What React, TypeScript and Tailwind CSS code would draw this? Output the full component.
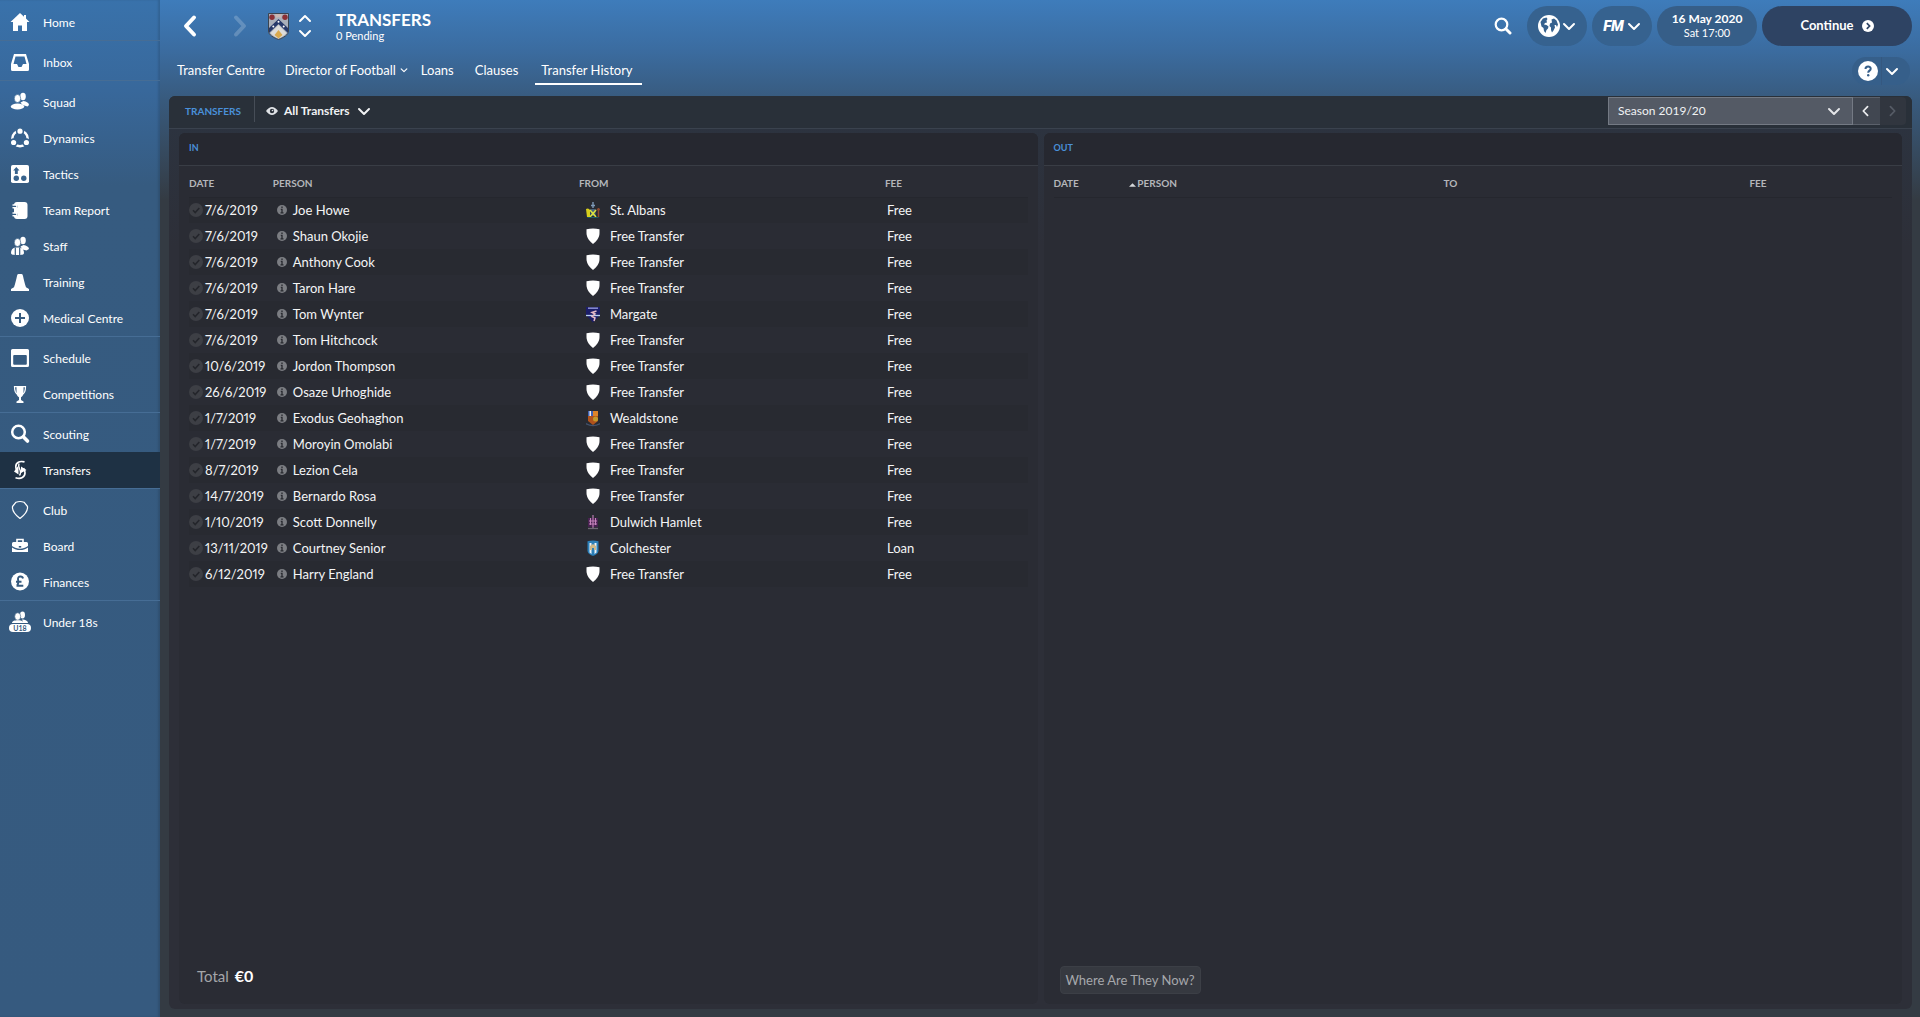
import React from "react";

type IconName =
  | "home"
  | "inbox"
  | "squad"
  | "dynamics"
  | "tactics"
  | "report"
  | "staff"
  | "training"
  | "medical"
  | "schedule"
  | "competitions"
  | "scouting"
  | "transfers"
  | "club"
  | "board"
  | "finances"
  | "under18";

interface NavItem {
  label: string;
  icon: IconName;
  active?: boolean;
}

const navGroups: NavItem[][] = [
  [{ label: "Home", icon: "home" }],
  [{ label: "Inbox", icon: "inbox" }],
  [
    { label: "Squad", icon: "squad" },
    { label: "Dynamics", icon: "dynamics" },
    { label: "Tactics", icon: "tactics" },
    { label: "Team Report", icon: "report" },
    { label: "Staff", icon: "staff" },
    { label: "Training", icon: "training" },
    { label: "Medical Centre", icon: "medical" },
  ],
  [
    { label: "Schedule", icon: "schedule" },
    { label: "Competitions", icon: "competitions" },
  ],
  [
    { label: "Scouting", icon: "scouting" },
    { label: "Transfers", icon: "transfers", active: true },
  ],
  [
    { label: "Club", icon: "club" },
    { label: "Board", icon: "board" },
    { label: "Finances", icon: "finances" },
  ],
  [{ label: "Under 18s", icon: "under18" }],
];

interface Transfer {
  date: string;
  person: string;
  from: string;
  fee: string;
}

const transfersIn: Transfer[] = [
  { date: "7/6/2019", person: "Joe Howe", from: "St. Albans", fee: "Free" },
  { date: "7/6/2019", person: "Shaun Okojie", from: "Free Transfer", fee: "Free" },
  { date: "7/6/2019", person: "Anthony Cook", from: "Free Transfer", fee: "Free" },
  { date: "7/6/2019", person: "Taron Hare", from: "Free Transfer", fee: "Free" },
  { date: "7/6/2019", person: "Tom Wynter", from: "Margate", fee: "Free" },
  { date: "7/6/2019", person: "Tom Hitchcock", from: "Free Transfer", fee: "Free" },
  { date: "10/6/2019", person: "Jordon Thompson", from: "Free Transfer", fee: "Free" },
  { date: "26/6/2019", person: "Osaze Urhoghide", from: "Free Transfer", fee: "Free" },
  { date: "1/7/2019", person: "Exodus Geohaghon", from: "Wealdstone", fee: "Free" },
  { date: "1/7/2019", person: "Moroyin Omolabi", from: "Free Transfer", fee: "Free" },
  { date: "8/7/2019", person: "Lezion Cela", from: "Free Transfer", fee: "Free" },
  { date: "14/7/2019", person: "Bernardo Rosa", from: "Free Transfer", fee: "Free" },
  { date: "1/10/2019", person: "Scott Donnelly", from: "Dulwich Hamlet", fee: "Free" },
  { date: "13/11/2019", person: "Courtney Senior", from: "Colchester", fee: "Loan" },
  { date: "6/12/2019", person: "Harry England", from: "Free Transfer", fee: "Free" },
];

const navIcons: Record<IconName, React.ReactNode> = {
  home: (
    <path d="M11 2 1.500 11H4v9h5v-5.500h4V20h5v-9h2.500L17 7.600V4h-2v1.700z" />
  ),
  inbox: (
    <path
      fillRule="evenodd"
      d="M5 3h12l3 10v5.500a1.500 1.500 0 0 1-1.500 1.500h-15A1.500 1.500 0 0 1 2 18.500V13zM6.500 5.500 4.500 13H8l1.500 3h3l1.500-3h3.500l-2-7.500z"
    />
  ),
  squad: (
    <>
      <ellipse cx="14" cy="5.500" rx="2.800" ry="3.700" />
      <path d="M14.500 10c3 .5 5.500 2 5.500 4l-1.500 1.500-5-1.500-2-2.500z" />
      <ellipse cx="8.500" cy="7.500" rx="3.200" ry="4" stroke="#386692" strokeWidth=".6" />
      <ellipse cx="8.500" cy="15.500" rx="6.700" ry="3" />
    </>
  ),
  dynamics: (
    <>
      <circle cx="11" cy="11.500" r="7.700" fill="none" stroke="currentColor" strokeWidth="2.400" />
      <g stroke="#37638e" strokeWidth="1.600">
        <circle cx="11" cy="4.200" r="3.400" />
        <circle cx="4.600" cy="15.500" r="3.400" />
        <circle cx="17.400" cy="15.500" r="3.400" />
      </g>
    </>
  ),
  tactics: (
    <>
      <rect x="2" y="2" width="18" height="18" rx="1.800" />
      <path d="m7.300 4 3.200 3.500H8.800V11H5.900V7.500H4.200z" fill="#37628c" />
      <circle cx="7.300" cy="15.300" r="2.700" fill="#37628c" />
      <circle cx="14.800" cy="15.300" r="2.700" fill="#37628c" />
    </>
  ),
  report: (
    <>
      <rect x="5" y="3" width="13.500" height="17" rx="3" />
      <g fill="none" stroke="#365d84" strokeWidth="3.200" strokeLinecap="round">
        <path d="M3 7.500h4M3 15.500h4" />
      </g>
      <g fill="none" stroke="currentColor" strokeWidth="1.400" strokeLinecap="round">
        <path d="M4 6h2.500a1.400 1.400 0 0 1 0 2.800H4M4 14h2.500a1.400 1.400 0 0 1 0 2.800H4" />
      </g>
    </>
  ),
  staff: (
    <>
      <ellipse cx="14" cy="5.500" rx="2.800" ry="3.700" />
      <path d="M14.500 10c3 .5 5.500 2 5.500 4l-2.500 1.500-4-1-2-3z" />
      <ellipse cx="8.500" cy="7.500" rx="3.200" ry="4" stroke="#365c82" strokeWidth=".6" />
      <path d="M2 18c0-3 1.500-5 4-5.500h5c2.500.5 4 2.500 4 5.500 0 1.700-2.500 2-6.500 2S2 19.700 2 18z" />
      <path d="M6.300 12.500v7.500M10.700 12.500v7.500" stroke="#365b7f" strokeWidth="1.200" />
    </>
  ),
  training: (
    <path d="M9.500 3h3c1 0 1.200.8 1.500 2 .8 3.500 1.700 7.500 3 11.300L20 18v2H2v-2l3-1.700C6.300 12.500 7.200 8.500 8 5c.3-1.200.5-2 1.500-2z" />
  ),
  medical: (
    <>
      <circle cx="11" cy="11" r="9" />
      <path d="M11 6v10M6 11h10" stroke="#365b7f" strokeWidth="2" />
    </>
  ),
  schedule: (
    <path
      fillRule="evenodd"
      d="M3.500 2h15A1.500 1.500 0 0 1 20 3.500v15a1.500 1.500 0 0 1-1.500 1.500h-15A1.500 1.500 0 0 1 2 18.500v-15A1.500 1.500 0 0 1 3.500 2zm1.700 6a1 1 0 0 0-1 1v7.700a1 1 0 0 0 1 1h11.600a1 1 0 0 0 1-1V9a1 1 0 0 0-1-1z"
    />
  ),
  competitions: (
    <>
      <path d="M7.500 3h7v6c0 3-1 4.500-2.500 5.300V17l2.500 1.500V20h-7v-1.500L10 17v-2.700C8.500 13.500 7.500 12 7.500 9z" />
      <path d="M8 3.700H5.500C5.500 8 6.200 10.500 9 11.500M14 3.700h2.500c0 4.300-.7 6.800-3.500 7.800" fill="none" stroke="currentColor" strokeWidth="1.200" />
    </>
  ),
  scouting: (
    <>
      <circle cx="9.500" cy="9" r="6.300" fill="none" stroke="currentColor" strokeWidth="2.500" />
      <path d="m14.500 14 4 4" stroke="currentColor" strokeWidth="3.600" strokeLinecap="round" />
    </>
  ),
  transfers: (
    <>
      <path d="M15.500 2.900C10.500 1.700 6.800 3.500 6.800 7.500c0 1 .2 2 .7 3M6.500 18.700c5.500 1.800 9.500-.5 9.500-5 0-1.700-.5-3-1.500-4.500" fill="none" stroke="currentColor" strokeWidth="1.700" />
      <path d="M9.500 6.500v9L5 12.500zM12 6v9M12 7.500l5.500 3.500-5.500 3z" />
      <path d="M10 4.500c-1.500 4 1.500 5 1.500 9 0 1-.3 2-1 3" fill="none" stroke="currentColor" strokeWidth="1.400" />
    </>
  ),
  club: (
    <path d="M7 3.200Q11 1.800 15 3.200l3.500 4.300c.5 4.500-3.500 9-7.500 12-4-3-8-7.500-7.500-12z" fill="none" stroke="currentColor" strokeWidth="1.200" strokeLinejoin="round" />
  ),
  board: (
    <>
      <path d="M8 7.500v-3h6v3" fill="none" stroke="currentColor" strokeWidth="1.600" />
      <path d="M4.500 7h13A1.500 1.500 0 0 1 19 8.500V11c-3 2-5 2.700-8 2.700S6 13 3 11V8.500A1.500 1.500 0 0 1 4.500 7z" />
      <path d="M3 12.500c3 2 5 2.500 8 2.500s5-.5 8-2.500V17H3z" />
      <path d="M9.800 11h2.400v1.600H9.800z" fill="#365a7e" />
    </>
  ),
  finances: (
    <>
      <circle cx="11" cy="10.500" r="9" />
      <path d="M14 7.500C13.500 4.700 8.800 4.800 9 8c.1 2 1.200 4-.9 6.500M7 10.700h5.500M7.500 14.700h6.800" fill="none" stroke="#365a7e" strokeWidth="1.900" />
    </>
  ),
  under18: (
    <>
      <ellipse cx="13.500" cy="4" rx="2.500" ry="3.400" />
      <ellipse cx="8.700" cy="5.500" rx="3" ry="3.700" stroke="#365a7e" strokeWidth=".6" />
      <path d="M3 12c0-2 3-2.700 5.500-2.700S13 9.500 14 11l-1-2.500c3 0 6 1.500 6 3.500z" />
      <rect x="0" y="13" width="22" height="8" rx="4" />
      <text x="11" y="19.500" textAnchor="middle" fontSize="7" fontFamily="Lato, sans-serif" fontWeight="700" fill="#365a7e">
        U18
      </text>
    </>
  ),
};

function Chevron({ dir, className }: { dir: "up" | "down" | "left" | "right"; className: string }) {
  const paths = {
    up: "M2 9 7 4l5 5",
    down: "M2 5l5 5 5-5",
    left: "M10 2 5 7l5 5",
    right: "M4 2l5 5-5 5",
  };
  return (
    <svg viewBox="0 0 14 14" fill="none" stroke="currentColor" strokeWidth="2" className={className} aria-hidden="true">
      <path d={paths[dir]} strokeLinecap="round" strokeLinejoin="round" />
    </svg>
  );
}

function ClubCrest() {
  return (
    <svg viewBox="0 0 21 27" className="w-[21px] h-[27px]" aria-hidden="true">
      <path d="M.5.5h20V18c0 4-5 6.500-10 8.500C5.500 24.500.5 22 .5 18z" fill="#a9afba" stroke="#3a4450" />
      <circle cx="4" cy="4.200" r="2.700" fill="#8a2f35" />
      <circle cx="17" cy="4.200" r="2.700" fill="#8a2f35" />
      <path d="M7 1h7l-1 4-2.500-1L8 5z" fill="#c9b6b3" />
      <path d="m10.500 6 9.500 9v5L10.500 11 1 20v-5z" fill="#26386a" />
      <circle cx="10.500" cy="8.700" r="1" fill="#fff" />
      <circle cx="5.300" cy="13.500" r="1" fill="#fff" />
      <circle cx="15.700" cy="13.500" r="1" fill="#fff" />
      <path d="m10.500 12 8 8c-2 2.800-5 4.200-8 5.500-3-1.300-6-2.700-8-5.500z" fill="#dddcda" />
      <path d="m10.500 17 4 5-4 3.500-4-3.500z" fill="#d9a94e" />
    </svg>
  );
}

function Badge({ club }: { club: string }) {
  let art: React.ReactNode = (
    <path d="M.5 1.200Q7-.2 13.500 1.200V5c0 5-3.500 8.500-6.500 11C4 13.500.5 10 .5 5z" fill="#fff" />
  );
  if (club === "St. Albans") {
    art = (
      <>
        <path d="M0 7q2.500-1.500 4 1v7H1z" fill="#d8cf1c" />
        <path d="M4.500 7h5v7h-5z" fill="#48617f" />
        <path d="m4 15 6-7M10 15 4 8" stroke="#dfe43a" strokeWidth="1.500" />
        <path d="M7 0v6M5 3.500h4" stroke="#7e9ab8" strokeWidth="1.400" />
        <path d="M12.500 6v9M10.800 7.500H14" stroke="#8d4a30" strokeWidth="1.500" />
        <path d="M1.500 15.500h11" stroke="#1c5a66" />
      </>
    );
  } else if (club === "Margate") {
    art = (
      <>
        <path d="M0 1h14v8l-7 7.500L0 9z" fill="#1b1d68" />
        <path d="M2 2.200h10" stroke="#8a8ed0" strokeWidth="1.500" />
        <path d="M0 9.500h14" stroke="#b9d0ee" strokeWidth="1.300" />
        <path d="M10.500 5 6 6.500 9 8 6 10.500l3 1.500-1 3" fill="none" stroke="#e3b9c6" strokeWidth="1.500" />
      </>
    );
  } else if (club === "Wealdstone") {
    art = (
      <>
        <path d="M2 1h10v10l-5 4-5-4z" fill="#b0521c" />
        <path d="M2 1h5v5H2z" fill="#3f62b5" />
        <path d="M3.500 1h1.500v5H3.500z" fill="#f0f0f0" />
        <path d="M7 1h5v5H7z" fill="#dc842a" />
        <circle cx="9.500" cy="9" r="2.500" fill="#c29a2c" />
        <path d="M0 13q7 4 14 0v1.500q-7 3.500-14 0z" fill="#43526b" />
      </>
    );
  } else if (club === "Dulwich Hamlet") {
    art = (
      <>
        <path d="M2 4h10v9H2z" fill="#46214f" />
        <path d="M7 1v13M3 7h8M3 10h8M4.500 4v7M9.500 4v7" stroke="#c582bb" strokeWidth="1.100" />
        <path d="M2 14.500h10" stroke="#6f6675" strokeWidth="1.300" />
      </>
    );
  } else if (club === "Colchester") {
    art = (
      <>
        <path d="M1.500 1.200Q7 0 12.500 1.200v9.300c0 3-3 4.500-5.500 5.500-2.500-1-5.500-2.500-5.500-5.500z" fill="#2b7fb8" />
        <path d="M3.500 3h2v11l-2-1.500zM8.500 3h2v9.500l-2 1.500z" fill="#eef3f7" />
        <path d="M4 6q3-3.500 6 0v4H8V8H6v2H4z" fill="#cdb98a" />
      </>
    );
  }
  return (
    <svg viewBox="0 0 14 17" className="w-[14px] h-[17px] shrink-0" aria-hidden="true">
      {art}
    </svg>
  );
}

function Sidebar() {
  return (
    <nav className="w-40 shrink-0 bg-[linear-gradient(to_bottom,#3972ab_0px,#38689b_90px,#365b80_185px,#365a7f_100%)] shadow-[inset_-2px_0_2px_rgba(0,0,0,0.12)]">
      {navGroups.map((group, index) => (
        <div
          key={group[0].label}
          className={index === 0 ? "pt-1" : "pt-[3px] border-t border-[#466d95]"}
        >
          {group.map((item) => (
            <a
              key={item.label}
              href="#"
              className={`h-9 pl-[9px] flex items-center gap-3 text-xs text-white ${
                item.active ? "bg-[#1e3144]" : ""
              }`}
            >
              <svg viewBox="0 0 22 22" fill="currentColor" className="w-[22px] h-[22px] shrink-0" aria-hidden="true">
                {navIcons[item.icon]}
              </svg>
              <span className="pt-[2px]">{item.label}</span>
            </a>
          ))}
        </div>
      ))}
    </nav>
  );
}

function Header() {
  return (
    <header className="pt-[6px] pr-2">
      <div className="flex items-center h-10 text-white">
        <button aria-label="Back" className="ml-[16px] w-7">
          <svg viewBox="0 0 28 24" className="w-7 h-6" fill="none" stroke="currentColor" strokeWidth="4" strokeLinecap="round" strokeLinejoin="round">
            <path d="m18 3.500-8 8.500 8 8.500" />
          </svg>
        </button>
        <button aria-label="Forward" className="ml-[22px] w-7 text-white/20">
          <svg viewBox="0 0 28 24" className="w-7 h-6" fill="none" stroke="currentColor" strokeWidth="4" strokeLinecap="round" strokeLinejoin="round">
            <path d="m10 3.500 8 8.500-8 8.500" />
          </svg>
        </button>
        <button aria-label="Club" className="ml-[14px]">
          <ClubCrest />
        </button>
        <div className="ml-[9px] w-[14px] flex flex-col">
          <button aria-label="Previous club">
            <Chevron dir="up" className="w-[14px] h-[14px]" />
          </button>
          <button aria-label="Next club">
            <Chevron dir="down" className="w-[14px] h-[14px]" />
          </button>
        </div>
        <div className="ml-6 pt-[2px]">
          <h1 className="text-[17px] leading-[18px] font-bold">TRANSFERS</h1>
          <p className="text-[11px] leading-[14px]">0 Pending</p>
        </div>

        <div className="ml-auto flex items-center gap-[5px]">
          <button aria-label="Search" className="mr-[10px]">
            <svg viewBox="0 0 18 18" className="w-[18px] h-[18px]" fill="none" stroke="currentColor">
              <circle cx="7.500" cy="7.500" r="5.800" strokeWidth="2.200" />
              <path d="m12 12 4 4" strokeWidth="3" strokeLinecap="round" />
            </svg>
          </button>
          <button aria-label="World" className="w-[60px] h-10 rounded-full bg-[#36628f] flex items-center justify-center gap-[2px]">
            <svg viewBox="0 0 22 22" className="w-[22px] h-[22px]">
              <circle cx="11" cy="11" r="11" fill="#fff" />
              <path d="M2.500 7 5 3.500l3.500-1 1 1.500-1 1.500.5 2-2 .5L6 9.500l2.500.5 2 1.500-.5 2-1.500 1.500-1 3-1.500-2-.5-3-2-1.500z" fill="#36628f" />
              <path d="m13.500 4.500 2.500-1 2.500 2 1.500 4-1 2.500-1-2-1.500 0 .5 2.500-1.500 3-1.500 2-1-2.500 0-2.500-1.500-1.500.5-2.500 2-1z" fill="#36628f" />
            </svg>
            <Chevron dir="down" className="w-[14px] h-[14px]" />
          </button>
          <button aria-label="FM menu" className="w-[60px] h-10 rounded-full bg-[#36628f] flex items-center justify-center gap-[3px]">
            <span className="font-['Roboto',sans-serif] text-[15px] font-black italic">FM</span>
            <Chevron dir="down" className="w-[14px] h-[14px]" />
          </button>
          <button className="w-[100px] h-10 rounded-full bg-[#365e88] flex flex-col items-center justify-center">
            <span className="text-xs leading-[14px] font-bold">16 May 2020</span>
            <span className="text-[11px] leading-[14px]">Sat 17:00</span>
          </button>
          <button className="w-[150px] h-10 rounded-full bg-[#2e4363] flex items-center justify-center gap-2 text-[13px] font-bold">
            Continue
            <svg viewBox="0 0 12 12" className="w-3 h-3">
              <circle cx="6" cy="6" r="6" fill="#fff" />
              <path d="M4.800 3.200 7.600 6 4.800 8.800" fill="none" stroke="#2e4363" strokeWidth="1.700" />
            </svg>
          </button>
        </div>
      </div>

      <div className="flex items-center justify-between h-[50px] text-white">
        <nav className="pl-[17px] pb-[2px] flex items-center text-[13px] leading-5">
          <a href="#">Transfer Centre</a>
          <a href="#" className="ml-5 flex items-center gap-1">
            Director of Football
            <Chevron dir="down" className="w-2 h-2" />
          </a>
          <a href="#" className="ml-[13px]">Loans</a>
          <a href="#" className="ml-[21px]">Clauses</a>
          <a href="#" className="relative ml-[23px]">
            Transfer History
            <span className="absolute -left-[6px] -right-[9px] top-[23px] h-[2px] bg-white" />
          </a>
        </nav>
        <div className="w-[58px] h-7 mr-[2px] rounded-full bg-[#365f8a] flex items-center">
          <button aria-label="Help" className="ml-[6px]">
            <svg viewBox="0 0 20 20" className="w-5 h-5">
              <circle cx="10" cy="10" r="10" fill="#fff" />
              <path d="M7.500 8c0-3.200 5.200-3.200 5.200-.3 0 2-2.500 1.800-2.500 4" fill="none" stroke="#365f8a" strokeWidth="2" />
              <circle cx="10.200" cy="14.300" r="1.200" fill="#365f8a" />
            </svg>
          </button>
          <span className="ml-[3px] w-px h-7 bg-[#355880]" />
          <button aria-label="Help menu" className="ml-[3px]">
            <Chevron dir="down" className="w-[14px] h-[14px]" />
          </button>
        </div>
      </div>
    </header>
  );
}

function Toolbar() {
  return (
    <div className="h-[33px] pr-[6px] flex items-center rounded-t-md bg-[#293039] border-b border-[#3a424e]">
      <h2 className="pl-4 pb-[2px] text-[10px] font-bold text-[#4a90d9]">TRANSFERS</h2>
      <span className="ml-[13px] mb-[6px] w-px h-[26px] bg-[#464d57]" />
      <button className="ml-[11px] pb-[2px] flex items-center text-xs font-bold text-[#f0f2f4]">
        <svg viewBox="0 0 12 8" className="w-3 h-2 mr-[6px]">
          <path d="M0 4q6-8 12 0-6 8-12 0z" fill="#dfe2e6" />
          <circle cx="6" cy="4" r="2.200" fill="#293039" />
          <circle cx="6.500" cy="3.500" r=".8" fill="#dfe2e6" />
        </svg>
        All Transfers
        <Chevron dir="down" className="ml-[7px] w-[14px] h-[14px]" />
      </button>

      <div className="ml-auto mb-[2px] flex items-center">
        <div className="relative">
          <select
            aria-label="Season"
            className="appearance-none w-[245px] h-7 pl-[9px] pr-8 bg-[#545a65] border border-[#747a84] text-xs text-[#f0f2f4]"
          >
            <option>Season 2019/20</option>
          </select>
          <Chevron dir="down" className="absolute right-3 top-[7px] w-[14px] h-[14px] text-[#e4e6e9] pointer-events-none" />
        </div>
        <button aria-label="Previous season" className="w-[27px] h-7 pr-1 bg-[#414751] border-y border-[#5b616b] flex items-center justify-center text-[#eceef0]">
          <Chevron dir="left" className="w-3 h-3" />
        </button>
        <button aria-label="Next season" disabled className="w-[26px] h-7 bg-[#31363f] rounded-r-sm flex items-center justify-center text-[#565c66]">
          <Chevron dir="right" className="w-3 h-3" />
        </button>
      </div>
    </div>
  );
}

interface PanelProps {
  title: string;
  columns: string[];
  sorted?: boolean;
  rows: Transfer[];
  children: React.ReactNode;
}

function TransferPanel({ title, columns, sorted, rows, children }: PanelProps) {
  return (
    <section className="flex-1 min-w-0 flex flex-col rounded-md bg-[#2a2c34]">
      <h3 className="h-[33px] pl-[10px] pb-[3px] flex items-center rounded-t-md bg-[#262830] border-b border-[#393d45] text-[9px] font-bold text-[#4a90d9]">
        {title}
      </h3>
      <div className="px-[10px]">
        <table className="w-full table-fixed border-collapse text-left">
          <colgroup>
            <col className="w-[10%]" />
            <col className="w-[36.5%]" />
            <col className="w-[36.5%]" />
            <col />
          </colgroup>
          <thead>
            <tr className="h-[31px] border-b border-[#25272e] text-[10px] text-[#b4b6ba]">
              {columns.map((column, index) => (
                <th key={column} className="relative p-0 pt-[5px] font-bold">
                  {sorted && index === 1 && (
                    <svg viewBox="0 0 8 4" className="absolute -left-2 top-[17px] w-[7px] h-1" aria-hidden="true">
                      <path d="M0 4 4 0l4 4z" fill="#d4d6d9" />
                    </svg>
                  )}
                  {column}
                </th>
              ))}
            </tr>
          </thead>
          <tbody className="text-[13px] leading-5 text-[#f4f5f6]">
            {rows.map((row) => (
              <tr key={row.person} className="h-[26px] odd:bg-[#282a31]">
                <td className="p-0">
                  <div className="flex items-center gap-[2px] whitespace-nowrap proportional-nums">
                    <svg viewBox="0 0 14 14" className="w-[14px] h-[14px] shrink-0" aria-hidden="true">
                      <circle cx="7" cy="7" r="7" fill="#3d3f45" />
                      <path d="m4 7.300 2.200 2.200L10.300 5" fill="none" stroke="#24262b" strokeWidth="1.600" />
                    </svg>
                    {row.date}
                  </div>
                </td>
                <td className="p-0">
                  <div className="pl-1 flex items-center gap-[6px]">
                    <svg viewBox="0 0 10 10" className="w-[10px] h-[10px] shrink-0" aria-hidden="true">
                      <circle cx="5" cy="5" r="5" fill="#7b7d82" />
                      <path d="M5 1.500v1.600M3.800 4.300h1.200v3.200M3.500 7.900h3" fill="none" stroke="#27292f" strokeWidth="1.300" />
                    </svg>
                    {row.person}
                  </div>
                </td>
                <td className="p-0">
                  <div className="pl-[7px] flex items-center gap-[10px]">
                    <Badge club={row.from} />
                    {row.from}
                  </div>
                </td>
                <td className="p-0 pl-[2px]">{row.fee}</td>
              </tr>
            ))}
          </tbody>
        </table>
      </div>
      <div className="mt-auto">{children}</div>
    </section>
  );
}

export default function App() {
  return (
    <div className="min-h-screen flex font-['Lato',sans-serif] bg-[#343b43]">
      <Sidebar />
      <div className="flex-1 min-w-0 flex flex-col pb-2 bg-[linear-gradient(to_bottom,#3e7cbb_0px,#3b6ca0_50px,#385a7d_100px,#343b43_200px)]">
        <Header />
        <main className="flex-1 ml-[9px] mr-2 flex flex-col rounded-md bg-[linear-gradient(to_bottom,#2c3441_0px,#2d2f38_150px)]">
          <Toolbar />
          <div className="flex-1 flex gap-[6px] px-[10px] pt-1 pb-[5px]">
            <TransferPanel title="IN" columns={["DATE", "PERSON", "FROM", "FEE"]} rows={transfersIn}>
              <p className="pl-[18px] pb-4 flex items-baseline gap-[6px] text-[15px] text-[#a3a5a9]">
                Total <b className="text-base text-white">€0</b>
              </p>
            </TransferPanel>
            <TransferPanel title="OUT" columns={["DATE", "PERSON", "TO", "FEE"]} sorted rows={[]}>
              <button className="ml-4 mb-[10px] w-[141px] h-7 pt-[2px] rounded bg-[#363940] border border-[#3c3f46] text-[13px] text-[#a6a8ac]">
                Where Are They Now?
              </button>
            </TransferPanel>
          </div>
        </main>
      </div>
    </div>
  );
}
